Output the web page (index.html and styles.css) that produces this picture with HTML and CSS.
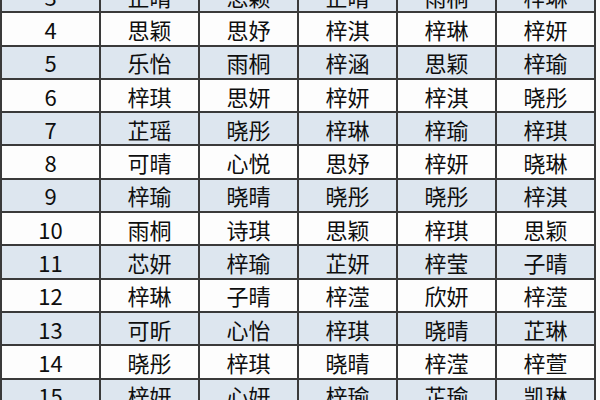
FILE: index.html
```html
<!DOCTYPE html>
<html lang="zh">
<head>
<meta charset="utf-8">
<link rel="stylesheet" href="styles.css">
</head>
<body>
<table class="names">
<tr class="alt"><td>3</td><td>芷晴</td><td>思颖</td><td>芷晴</td><td>雨桐</td><td>梓琳</td></tr>
<tr><td>4</td><td>思颖</td><td>思妤</td><td>梓淇</td><td>梓琳</td><td>梓妍</td></tr>
<tr class="alt"><td>5</td><td>乐怡</td><td>雨桐</td><td>梓涵</td><td>思颖</td><td>梓瑜</td></tr>
<tr><td>6</td><td>梓琪</td><td>思妍</td><td>梓妍</td><td>梓淇</td><td>晓彤</td></tr>
<tr class="alt"><td>7</td><td>芷瑶</td><td>晓彤</td><td>梓琳</td><td>梓瑜</td><td>梓琪</td></tr>
<tr><td>8</td><td>可晴</td><td>心悦</td><td>思妤</td><td>梓妍</td><td>晓琳</td></tr>
<tr class="alt"><td>9</td><td>梓瑜</td><td>晓晴</td><td>晓彤</td><td>晓彤</td><td>梓淇</td></tr>
<tr><td>10</td><td>雨桐</td><td>诗琪</td><td>思颖</td><td>梓琪</td><td>思颖</td></tr>
<tr class="alt"><td>11</td><td>芯妍</td><td>梓瑜</td><td>芷妍</td><td>梓莹</td><td>子晴</td></tr>
<tr><td>12</td><td>梓琳</td><td>子晴</td><td>梓滢</td><td>欣妍</td><td>梓滢</td></tr>
<tr class="alt"><td>13</td><td>可昕</td><td>心怡</td><td>梓琪</td><td>晓晴</td><td>芷琳</td></tr>
<tr><td>14</td><td>晓彤</td><td>梓琪</td><td>晓晴</td><td>梓滢</td><td>梓萱</td></tr>
<tr class="alt"><td>15</td><td>梓妍</td><td>心妍</td><td>梓瑜</td><td>芷瑜</td><td>凯琳</td></tr>
</table>
</body>
</html>
```
FILE: styles.css
```css
html, body {
  margin: 0;
  padding: 0;
  background: #fbfbfb;
  overflow: hidden;
}
.names {
  border-collapse: collapse;
  table-layout: fixed;
  width: 596px;
  margin-top: -22px;
  font-family: "Noto Sans CJK SC", "Noto Sans", sans-serif;
  font-size: 22px;
  color: #0e0e0e;
  background: #fdfdfd;
}
.names td {
  border: 2px solid #3a3a3a;
  height: 31.3px;
  padding: 0;
  text-align: center;
  vertical-align: middle;
  line-height: 1;
}
.names tr.alt td {
  background: #dde6ef;
}
```
